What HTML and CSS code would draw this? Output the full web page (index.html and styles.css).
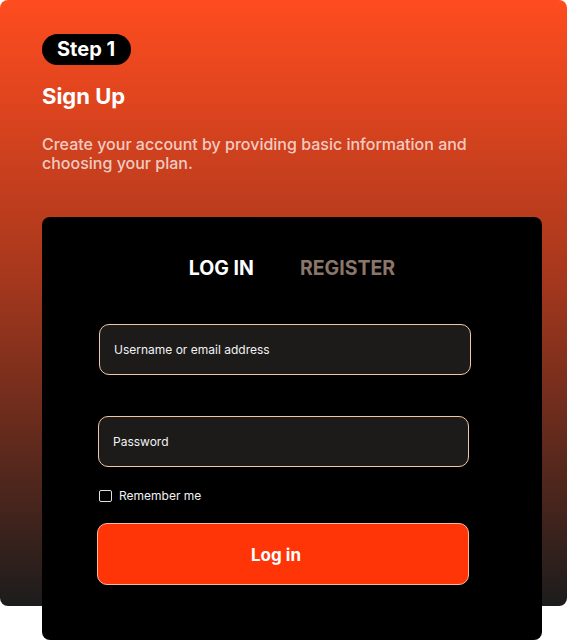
FILE: index.html
```html
<!DOCTYPE html>
<html lang="en">
<head>
    <meta charset="UTF-8">
    <meta name="viewport" content="width=device-width, initial-scale=1.0">
    <title>Sign Up - Step 1</title>
    <link rel="stylesheet" href="styles.css">
</head>
<body>
    <div class="hero">
        <span class="step-pill">Step 1</span>
        <h1>Sign Up</h1>
        <p class="lead">Create your account by providing basic information and choosing your plan.</p>

        <div class="auth-card">
            <div class="tabs">
                <span class="tab active">LOG IN</span>
                <span class="tab">REGISTER</span>
            </div>

            <form class="login-form">
                <input type="text" class="field" placeholder="Username or email address">
                <input type="password" class="field field-password" placeholder="Password">

                <label class="remember">
                    <span class="check-box"></span>
                    Remember me
                </label>

                <button type="button" class="login-btn">Log in</button>
            </form>
        </div>
    </div>
</body>
</html>
```

FILE: styles.css
```css
body {
    margin: 0;
    background: #ffffff;
    font-family: 'Inter', 'Noto Sans', sans-serif;
}

.hero {
    position: relative;
    width: 567px;
    box-sizing: border-box;
    padding: 34px 25px 1px 42px;
}

/* gradient panel sits behind the content and stops above the card bottom */
.hero::before {
    content: '';
    position: absolute;
    top: 0;
    left: 0;
    right: 0;
    height: 606px;
    background: linear-gradient(180deg, #ff4c1f 0%, #a8381d 45%, #1c1c1c 100%);
    border-radius: 8px;
    z-index: -1;
}

.step-pill {
    display: inline-block;
    height: 31px;
    line-height: 31px;
    padding: 0 16px 0 15px;
    background: #000000;
    color: #ffffff;
    font-size: 20px;
    font-weight: 700;
    border-radius: 16px;
}

h1 {
    margin: 17px 0 0;
    font-size: 22px;
    line-height: 28px;
    font-weight: 700;
    color: #ffffff;
}

.lead {
    margin: 25px 0 0;
    font-size: 16px;
    line-height: 19.3px;
    font-weight: 500;
    color: rgba(255, 255, 255, 0.74);
    max-width: 440px;
}

.auth-card {
    margin-top: 43px;
    width: 500px;
    height: 423px;
    box-sizing: border-box;
    padding: 39px 0 0 57px;
    background: #000000;
    border-radius: 8px;
}

.tabs {
    display: flex;
    justify-content: center;
    gap: 46px;
    padding-right: 57px;
}

.tab {
    font-size: 19.5px;
    line-height: 24px;
    font-weight: 700;
    color: #8b7769;
}

.tab.active {
    color: #ffffff;
}

.login-form {
    display: flex;
    flex-direction: column;
    margin-top: 44px;
    width: 372px;
}

.field {
    height: 51px;
    box-sizing: border-box;
    padding: 0 14px;
    background: #1c1b1a;
    border: 1px solid #f3c7a6;
    border-radius: 10px;
    color: #ffffff;
    font-family: inherit;
    font-size: 12px;
    outline: none;
}

.field::placeholder {
    color: #f2f2f2;
}

.field-password {
    margin-top: 41px;
    width: 371px;
    margin-left: -1px;
}

.remember {
    display: flex;
    align-items: center;
    gap: 7px;
    margin-top: 22px;
    font-size: 12px;
    line-height: 14px;
    color: #f2f2f2;
}

.check-box {
    width: 13px;
    height: 12px;
    box-sizing: border-box;
    border: 1px solid #e0e0e0;
    border-radius: 2px;
}

.login-btn {
    margin-top: 20px;
    margin-left: -2px;
    width: 372px;
    height: 62px;
    padding: 3px 14px 0 0;
    background: #ff3508;
    border: 1px solid #f7b89a;
    border-radius: 10px;
    color: #ffffff;
    font-family: inherit;
    font-size: 17px;
    font-weight: 700;
    cursor: pointer;
}
```
